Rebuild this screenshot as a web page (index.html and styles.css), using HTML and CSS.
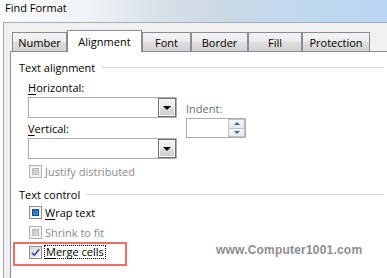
FILE: index.html
```html
<!DOCTYPE html>
<html lang="en">
<head>
    <meta charset="UTF-8">
    <title>Find Format</title>
    <link rel="stylesheet" href="styles.css">
</head>
<body>
    <div class="window">
        <div class="titlebar">Find Format</div>
        <div class="client">
            <div class="tabs">
                <div class="tab tab-number">Number</div>
                <div class="tab tab-alignment active">Alignment</div>
                <div class="tab tab-font">Font</div>
                <div class="tab tab-border">Border</div>
                <div class="tab tab-fill">Fill</div>
                <div class="tab tab-protection">Protection</div>
            </div>

            <div class="panel">
                <div class="group-title">Text alignment</div>

                <div class="align-fields">
                    <div class="field-col">
                        <div class="field-label"><u>H</u>orizontal:</div>
                        <div class="combo"><span class="combo-btn"><span class="arrow"></span></span></div>
                        <div class="field-label second"><u>V</u>ertical:</div>
                        <div class="combo"><span class="combo-btn"><span class="arrow"></span></span></div>
                    </div>
                    <div class="indent-col">
                        <div class="field-label disabled">Indent:</div>
                        <div class="spinner">
                            <div class="spin-btns">
                                <span class="spin"><span class="tri-up"></span></span>
                                <span class="spin"><span class="tri-down"></span></span>
                            </div>
                        </div>
                    </div>
                </div>

                <div class="check disabled first-check"><span class="box"></span>Justify distributed</div>

                <div class="group-title second-group">Text control</div>

                <div class="check"><span class="box mixed"></span><u>W</u>rap text</div>
                <div class="check disabled"><span class="box"></span>Shrink to fit</div>
                <div class="check merge-row">
                    <span class="box checked">
                        <svg width="11" height="11" viewBox="0 0 11 11">
                            <path d="M2 5.8 L4.3 8.3 L9.2 2.2" fill="none" stroke="#33438f" stroke-width="1.5" stroke-linejoin="round"/>
                        </svg>
                    </span>
                    <span class="focus"><u>M</u>erge cells</span>
                    <span class="highlight"></span>
                    <span class="watermark">www.Computer1001.com</span>
                </div>
            </div>
        </div>
    </div>
</body>
</html>
```

FILE: styles.css
```css
body {
    margin: 0;
    width: 387px;
    height: 278px;
    overflow: hidden;
    font-family: "Open Sans", "Segoe UI", sans-serif;
    font-size: 11px;
    line-height: 15px;
    color: #000;
    background: linear-gradient(90deg, #fbfcfd 0%, #f1f4f7 22%, #d9e1e9 40%, #cdd9e5 55%, #c3d9ee 72%, #b9d6f2 100%);
}

u {
    text-decoration-thickness: 1px;
    text-underline-offset: 2px;
}

.window {
    width: 400px;
    height: 278px;
    overflow: hidden;
}

.titlebar {
    height: 22px;
    padding-left: 5px;
    box-sizing: border-box;
}

.client {
    margin-left: 3px;
    height: 256px;
    box-sizing: border-box;
    padding: 7px 0 0 8px;
    border-top: 1px solid #a3adb8;
    border-left: 1px solid #a3adb8;
    background: #f0f0f0;
}

/* tabs */

.tabs {
    display: flex;
    align-items: flex-start;
    height: 22px;
    position: relative;
    z-index: 1;
}

.tab {
    box-sizing: border-box;
    height: 19px;
    margin-top: 2px;
    padding-top: 2px;
    text-align: center;
    border: 1px solid #898c95;
    border-bottom: 0;
    background: linear-gradient(#f4f4f4, #ececec 50%, #dedede 50%, #d2d2d2);
}

.tab.active {
    height: 22px;
    margin-top: 0;
    padding-top: 3px;
    background: #fff;
}

.tab-number { width: 55px; }
.tab-alignment { width: 75px; }
.tab-font { width: 49px; }
.tab-border { width: 57px; }
.tab-fill { width: 54px; }
.tab-protection { width: 68px; }

/* panel */

.panel {
    margin: -1px 0 0 -2px;
    height: 227px;
    box-sizing: border-box;
    padding-top: 8px;
    border: 1px solid #898c95;
    border-bottom: 0;
    background: #fff;
    position: relative;
}

.group-title {
    display: flex;
    align-items: center;
    padding-left: 8px;
    margin-right: 15px;
}

.group-title::after {
    content: '';
    flex: 1;
    margin-left: 6px;
    border-top: 1px solid #d5dce3;
}

.second-group {
    margin-top: 6px;
}

.align-fields {
    display: flex;
    gap: 9px;
    padding-left: 17px;
    margin-top: 5px;
}

.field-col {
    width: 149px;
}

.field-label {
    margin-bottom: 2px;
}

.field-label.second {
    margin-top: 3px;
}

.field-label.disabled {
    color: #6d6d6d;
}

.combo {
    display: flex;
    justify-content: flex-end;
    height: 21px;
    box-sizing: border-box;
    border: 1px solid #abadb3;
}

.combo-btn {
    display: flex;
    align-items: center;
    justify-content: center;
    width: 18px;
    box-sizing: border-box;
    border: 1px solid #707070;
    box-shadow: inset 0 0 0 1px #f8f8f8;
    background: linear-gradient(#f2f2f2, #ebebeb 50%, #dddddd 50%, #cfcfcf);
}

.arrow {
    width: 0;
    height: 0;
    border-left: 4px solid transparent;
    border-right: 4px solid transparent;
    border-top: 4px solid #000;
    margin-top: 1px;
}

.indent-col {
    padding-top: 21px;
}

.spinner {
    display: flex;
    justify-content: flex-end;
    width: 60px;
    height: 20px;
    box-sizing: border-box;
    border: 1px solid #abadb3;
}

.spin-btns {
    display: flex;
    flex-direction: column;
    width: 17px;
}

.spin {
    flex: 1;
    display: flex;
    align-items: center;
    justify-content: center;
    border: 1px solid #bcc3cc;
    background: linear-gradient(#f6f7f9, #e6e9ee);
}

.spin + .spin {
    border-top: 0;
}

.tri-up,
.tri-down {
    width: 0;
    height: 0;
    border-left: 3px solid transparent;
    border-right: 3px solid transparent;
}

.tri-up {
    border-bottom: 3px solid #4d6185;
}

.tri-down {
    border-top: 3px solid #4d6185;
}

/* checkboxes */

.check {
    display: flex;
    align-items: center;
    height: 20px;
    padding-left: 18px;
    position: relative;
}

.first-check {
    margin-top: 2px;
}

.check.disabled {
    color: #8b8b8b;
}

.box {
    flex: none;
    width: 13px;
    height: 13px;
    box-sizing: border-box;
    margin-right: 3px;
    padding: 2px;
    border: 1px solid #8e8f8f;
    background: #f4f4f4;
}

.box::after {
    content: '';
    display: block;
    width: 100%;
    height: 100%;
}

.check.disabled .box {
    border-color: #b1b1b1;
}

.check.disabled .box::after {
    background: linear-gradient(135deg, #c2c2c2, #e2e2e2);
    box-shadow: inset 0 0 0 1px #bcbcbc;
}

.box.mixed::after {
    background: linear-gradient(135deg, #1c58a0, #4aa2e4);
    box-shadow: inset 0 0 0 1px #1d4c86;
}

.box.checked {
    padding: 0;
    background: linear-gradient(135deg, #d6d9e1, #f6f6f8);
}

.box.checked::after {
    display: none;
}

.box.checked svg {
    display: block;
}

.focus {
    margin-left: -1px;
    padding: 0 1px;
    line-height: 12px;
    border: 1px dotted #000;
}

.highlight {
    position: absolute;
    left: 2px;
    top: 0;
    width: 114px;
    height: 24px;
    box-sizing: border-box;
    border: 2px solid #f26b6b;
}

.watermark {
    position: absolute;
    left: 205px;
    top: 2px;
    font-family: "Liberation Sans", Arial, sans-serif;
    font-weight: bold;
    font-size: 12px;
    line-height: 13px;
    letter-spacing: 0.2px;
    color: #8c8c8c;
}
```
